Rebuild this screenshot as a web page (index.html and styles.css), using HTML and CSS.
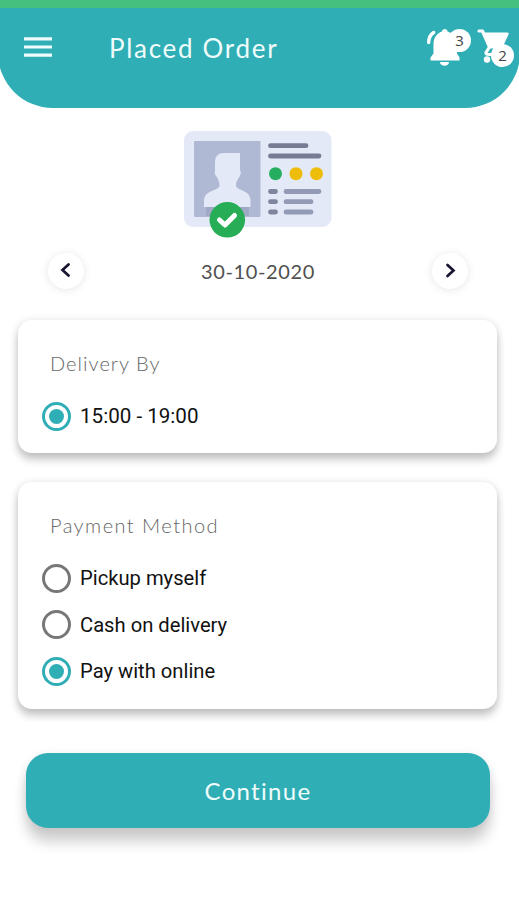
FILE: index.html
```html
<!DOCTYPE html>
<html lang="en">
<head>
<meta charset="utf-8">
<title>Placed Order</title>
<link rel="stylesheet" href="styles.css">
</head>
<body>
<div class="status"></div>
<header class="bar">
  <svg class="menu" width="28" height="20" viewBox="0 0 28 20"><path d="M0 1.800h28M0 10h28M0 18.200h28" stroke="#effcfc" stroke-width="3.200"/></svg>
  <h1 class="title">Placed Order</h1>
  <div class="action bell">
    <svg width="44" height="42" viewBox="427 26 44 42">
      <path d="M429.700 42.500c0-4.500 1.800-8 5-10" fill="none" stroke="#fff" stroke-width="3.400" stroke-linecap="round"/>
      <path d="M443 31.500c0-3.500 5.500-3.500 5.500 0 6.500 2 9.500 7 9.500 13v9l2.500 4v3h-29v-3l3-4v-9c0-6.500 3-11 8.500-13z" fill="#fff"/>
      <path d="M441 62h9c0 5-9 5-9 0z" fill="#fff"/>
    </svg>
    <span class="badge">3</span>
  </div>
  <div class="action cart">
    <svg width="36" height="42" viewBox="478 26 36 42">
      <path d="M480 31h3.500l7 16-3.500 5.500q-.5 2 3 2h10" fill="none" stroke="#fff" stroke-width="3.200" stroke-linecap="round" stroke-linejoin="round"/>
      <path d="M484.500 32.500H508q2.500 0 1.500 2L503 48.500h-13z" fill="#fff"/>
      <circle cx="488" cy="59.500" r="3.200" fill="#fff"/>
    </svg>
    <span class="badge">2</span>
  </div>
</header>
<main class="content">
  <svg class="card-art" width="150" height="110" viewBox="183 130 150 110">
    <rect x="184" y="131" width="147.500" height="96" rx="9" fill="#e4e9f8"/>
    <rect x="194" y="141" width="66.500" height="76" rx="1" fill="#b0b9d4"/>
    <path d="M215 162q0-9 9-9h16v17c2 3 0 6-2 9-1.500 3-2 3-2 7 2 5 14 4 14.500 14v7H204v-7c1-10 14-9 15.500-14 0-4-1-5-2-8-2-2-3.500-5-2.500-7z" fill="#e4e9f8"/>
    <path d="M206 207h43v9h-43z" fill="#a0a9c5"/>
    <g fill="none" stroke-width="4.800" stroke-linecap="round">
      <path d="M270.500 145.700h35.500M270.500 156h48.500" stroke="#757c93"/>
      <path d="M270.500 191.500h5M270.500 201.700h5M270.500 212h5" stroke="#7d869c"/>
      <path d="M286 191.500h33M286 201.700h25M286 212h25" stroke="#929ab5"/>
    </g>
    <circle cx="275.500" cy="173.700" r="6.500" fill="#26ad60"/>
    <circle cx="296" cy="173.700" r="6.500" fill="#edbd0a"/>
    <circle cx="316.500" cy="173.700" r="6.500" fill="#edbd0a"/>
    <circle cx="227.300" cy="219.800" r="17.800" fill="#26ad56"/>
    <path d="M219.500 220l5.500 5 9.500-9.500" fill="none" stroke="#fff" stroke-width="5" stroke-linecap="round" stroke-linejoin="round"/>
  </svg>
  <div class="date-row">
    <button class="round" aria-label="Previous"><svg width="12" height="16" viewBox="0 0 12 16"><path d="M8.500 1.500L2.500 7l6 5.500" /></svg></button>
    <span class="date">30-10-2020</span>
    <button class="round" aria-label="Next"><svg width="12" height="16" viewBox="0 0 12 16"><path d="M3.500 2l6 5.500-6 5.500" /></svg></button>
  </div>
  <section class="panel delivery">
    <h2 class="heading">Delivery By</h2>
    <div class="option"><i class="radio on"></i><span class="time">15:00 - 19:00</span></div>
  </section>
  <section class="panel payment">
    <h2 class="heading">Payment Method</h2>
    <div class="option"><i class="radio"></i><span>Pickup myself</span></div>
    <div class="option"><i class="radio"></i><span>Cash on delivery</span></div>
    <div class="option"><i class="radio on"></i><span>Pay with online</span></div>
  </section>
</main>
<button class="continue">Continue</button>
</body>
</html>
```

FILE: styles.css
```css
* { box-sizing: border-box; }
body {
  margin: 0;
  width: 519px;
  height: 900px;
  overflow: hidden;
  background: #fff;
  font-family: Roboto, sans-serif;
}
button { border: 0; padding: 0; }
h1, h2 { margin: 0; font-weight: 400; }
.status { height: 8px; background: #45c07f; }
.bar {
  display: flex;
  align-items: flex-start;
  height: 100px;
  margin: 0 -1px 0 -2px;
  padding-left: 26px;
  background: #30aeb6;
  border-radius: 0 0 55px 55px;
}
.menu { margin-top: 29px; }
.title {
  width: 317px;
  margin: 23px 0 0 57px;
  font: 400 26px/34px Lato, sans-serif;
  letter-spacing: 1.7px;
  color: #effcfc;
}
.action { position: relative; height: 42px; margin-top: 18px; }
.cart { margin-left: 7px; }
.badge {
  position: absolute;
  width: 23px;
  height: 23px;
  border-radius: 50%;
  background: #fff;
  color: #444;
  font: 400 15px/23px "Open Sans", sans-serif;
  text-align: center;
}
.bell .badge { left: 22px; top: 3px; }
.cart .badge { left: 14px; top: 18px; }
.content { height: 614px; overflow: hidden; }
.card-art { display: block; margin: 22px 0 0 183px; }
.date-row {
  display: flex;
  justify-content: space-between;
  align-items: center;
  height: 38px;
  margin: 12px 51px 0 48px;
}
.round {
  display: grid;
  place-items: center;
  width: 36px;
  height: 36px;
  border-radius: 50%;
  background: #fff;
  box-shadow: 0 1px 8px rgba(0, 0, 0, .1);
}
.round path { fill: none; stroke: #17152f; stroke-width: 2.7; stroke-linecap: round; }
.date {
  font: 400 20px/26px Lato, sans-serif;
  letter-spacing: .65px;
  color: #505050;
}
.panel {
  width: 479px;
  margin-left: 18px;
  padding: 29px 0 0 24px;
  border-radius: 14px;
  background: #fff;
  box-shadow: 0 7px 8px rgba(0, 0, 0, .19), 0 1px 9px rgba(0, 0, 0, .13);
}
.delivery { height: 133px; margin-top: 30px; }
.payment { height: 227px; margin-top: 29px; }
.heading {
  height: 44px;
  margin-left: 8px;
  font: 300 20px/28px Lato, sans-serif;
  letter-spacing: 1.45px;
  color: #666;
}
.delivery .heading { letter-spacing: 1.05px; }
.option {
  display: flex;
  align-items: center;
  gap: 9px;
  height: 46.500px;
  font-size: 20.200px;
  color: #111;
}
.time { font-size: 20.600px; }
.radio {
  display: grid;
  place-items: center;
  width: 29px;
  height: 29px;
  border: 2.500px solid #777;
  border-width: 3px;
  border-radius: 50%;
}
.radio.on { border-color: #30aeb6; }
.radio.on::after {
  content: "";
  width: 15px;
  height: 15px;
  border-radius: 50%;
  background: #30aeb6;
}
.continue {
  display: block;
  width: 464px;
  height: 75px;
  margin: 31px 0 0 26px;
  border-radius: 22px;
  background: #30aeb6;
  box-shadow: 0 14px 13px rgba(0, 0, 0, .19), 0 1px 10px rgba(0, 0, 0, .08);
  font: 400 24px/73px Lato, sans-serif;
  letter-spacing: 1.3px;
  color: #effcfc;
}
```
